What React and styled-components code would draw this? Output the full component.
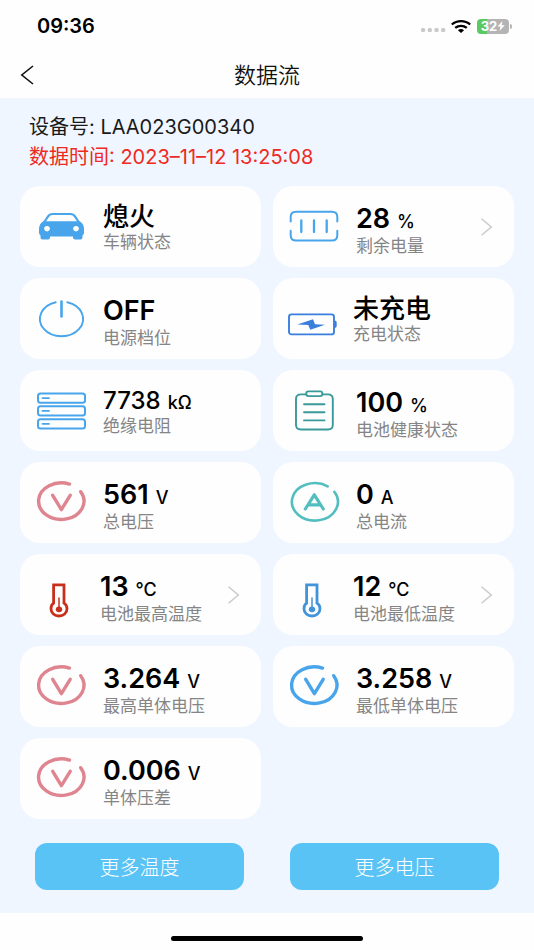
import React from "react";
import styled, { createGlobalStyle } from "styled-components";

const GlobalStyle = createGlobalStyle`
  *, *::before, *::after { box-sizing: border-box; }
  body {
    margin: 0;
    background: #fefefe;
    color: #111;
    font-family: Inter, "Noto Sans CJK SC", sans-serif;
  }
  button { font: inherit; color: inherit; border: 0; background: none; padding: 0; cursor: pointer; }
`;

const Screen = styled.div`
  min-height: 100vh;
  display: flex;
  flex-direction: column;
`;

const StatusBar = styled.div`
  height: 52px;
  padding: 0 22px 0 37px;
  display: flex;
  align-items: center;
  justify-content: space-between;
`;

const Clock = styled.time`
  font-size: 20px;
  font-weight: 600;
  line-height: 24px;
  color: #000;
`;

const StatusIcons = styled.div`
  display: flex;
  align-items: center;
  gap: 6px;
`;

const BatteryPill = styled.div`
  display: flex;
  align-items: center;
  justify-content: center;
  width: 32px;
  height: 15px;
  border-radius: 4px;
  color: #fff;
  font-size: 13px;
  font-weight: 700;
  line-height: 15px;
  background: linear-gradient(90deg, #5bc962 32%, #b4b4b4 32%);
`;

const BatteryGroup = styled.div`
  display: flex;
  align-items: center;
  gap: 1px;
`;

const BatteryNub = styled.span`
  width: 2px;
  height: 5px;
  border-radius: 0 2px 2px 0;
  background: #b4b4b4;
`;

const NavBar = styled.header`
  height: 46px;
  padding: 0 20px;
  display: grid;
  grid-template-columns: 40px 1fr 40px;
  align-items: center;
`;

const BackButton = styled.button`
  display: flex;
  align-items: center;
  height: 40px;
`;

const Title = styled.h1`
  margin: 0;
  text-align: center;
  font-size: 22px;
  font-weight: 350;
  line-height: 30px;
`;

const Content = styled.main`
  flex: 1;
  background: #eff6ff;
  padding: 14px 20px 23px;
`;

const Info = styled.div`
  padding: 0 9px 14px;
`;

const InfoLine = styled.p`
  margin: 0;
  font-size: 20px;
  font-weight: 400;
  line-height: 30px;
  color: ${(p) => (p.$alert ? "#ee2a22" : "#1a1a1a")};
`;

const Grid = styled.div`
  display: grid;
  grid-template-columns: 1fr 1fr;
  gap: 11px 12px;
`;

const Card = styled.div`
  height: 81px;
  padding: 0 22px 0 16px;
  display: flex;
  align-items: center;
  gap: ${(p) => (p.$near ? 14 : 17)}px;
  border-radius: 20px;
  background: #fefefe;
  text-align: left;
`;

const Reading = styled.div`
  flex: 1;
  align-self: flex-start;
  padding-top: 18px;
  display: flex;
  flex-direction: column;
  white-space: nowrap;
`;

const Value = styled.span`
  display: flex;
  align-items: baseline;
  gap: 7px;
  height: ${(p) => (p.$tight ? 26 : 30)}px;
  line-height: ${(p) => (p.$tight ? 26 : 30)}px;
  font-size: ${(p) => (p.$small ? 24 : 27)}px;
  font-weight: ${(p) => (p.$small ? 500 : 600)};
  color: #000;
`;

const CjkValue = styled(Value)`
  font-size: 26px;
  font-weight: 500;
`;

const Unit = styled.span`
  font-size: 18px;
  font-weight: 500;
`;

const Label = styled.span`
  font-size: 17px;
  line-height: 24px;
  color: #858585;
`;

const Drawing = styled.svg`
  flex: none;
  display: block;
  overflow: visible;
`;

const Actions = styled.div`
  display: grid;
  grid-template-columns: 1fr 1fr;
  gap: 46px;
  padding: 24px 15px 0;
`;

const ActionButton = styled.button`
  && {
    height: 47px;
    border-radius: 12px;
    background: #5ac3f5;
    color: #fff;
    font-size: 20px;
    font-weight: 300;
  }
`;

const HomeArea = styled.footer`
  height: 37px;
  display: flex;
  justify-content: center;
  align-items: flex-end;
  padding-bottom: 9px;
`;

const HomeIndicator = styled.div`
  width: 36%;
  height: 5px;
  border-radius: 3px;
  background: #000;
`;

const BLUE = "#48a5eb";
const ROSE = "#df8590";

const Icon = ({ children, color, width = 2 }) => (
  <Drawing
    width="50"
    height="50"
    viewBox="0 0 50 50"
    fill="none"
    stroke={color}
    strokeWidth={width}
    strokeLinecap="round"
    strokeLinejoin="round"
    aria-hidden="true"
  >
    {children}
  </Drawing>
);

const CarIcon = () => (
  <Icon color={BLUE} width={2.2}>
    <path d="M8 20.500 11.700 14.800Q13.600 12 16.600 12H34.400Q37.400 12 39.300 14.800L43 20.500" />
    <path
      fill={BLUE}
      stroke="none"
      fillRule="evenodd"
      d="M7.500 19.200H43.500C46.300 20.500 48 23.500 48 27V30.500Q48 32.500 46.500 33.500V35.500Q46.500 37.500 44.500 37.500H39Q37 37.500 37 35.500V34.500H14V35.500Q14 37.500 12 37.500H6.500Q4.500 37.500 4.500 35.500V33.500Q3 32.500 3 30.500V27C3 23.500 4.700 20.500 7.500 19.200ZM11 24a2.900 2.700 0 1 0 .01 0ZM40 24a2.900 2.700 0 1 0 .01 0Z"
    />
  </Icon>
);

const PowerIcon = () => (
  <Icon color={BLUE} width={1.9}>
    <path d="M19.700 8.300A21.600 17.300 0 1 0 31.300 8.300" />
    <path d="M25.500 7.500V22.500" strokeWidth="2.6" />
  </Icon>
);

const PackIcon = () => (
  <Icon color={BLUE}>
    <path d="M1.700 19.500V15Q1.700 9.800 7 9.800H43Q48.300 9.800 48.300 15V19.500M1.700 28.700V33.200Q1.700 38.500 7 38.500H43Q48.300 38.500 48.300 33.200V28.700" />
    <path d="M12.300 18.500V30M25 18.500V30M37.700 18.500V30" strokeWidth="2.3" />
  </Icon>
);

const ChargeIcon = () => (
  <Icon color="#3b7fdd" width={1.9}>
    <rect x="0" y="20.400" width="45" height="20" rx="2.500" />
    <path d="M45.500 26.500Q47.700 26.500 47.700 28.500V32Q47.700 34 45.500 34Z" fill="#3b7fdd" stroke="none" />
    <path d="M8.300 30.400 24 25.200 26 30.300 36 30.800 21.300 35.800 19.300 31Z" fill="#3b7fdd" stroke="none" />
  </Icon>
);

const StackIcon = () => (
  <Icon color={BLUE}>
    {[7.5, 20.3, 33.2].map((y) => (
      <g key={y}>
        <rect x="2" y={y} width="47" height="9.200" rx="2.500" />
        <path d={`M6.500 ${y + 4.6}H13`} strokeWidth="1.8" />
      </g>
    ))}
  </Icon>
);

const ClipboardIcon = () => (
  <Icon color="#3c9999" width={1.9}>
    <path d="M16.700 8.400H12Q7 8.400 7 13V39Q7 43.500 12 43.500H39Q43.800 43.500 43.800 39V13Q43.800 8.400 39 8.400H33.700" />
    <rect x="17.300" y="5.400" width="16" height="4.700" rx="2" />
    <path d="M15 18.300H35.500M15 26.300H35.500M15 34.400H35.500" />
  </Icon>
);

const VoltIcon = ({ color }) => (
  <Icon color={color} width={3.4}>
    <path d="M33.500 6.100A22.700 18.300 0 1 0 44.700 13.700" />
    <path d="M16.700 17.300 25.400 31.600 34.200 17.300" />
  </Icon>
);

const AmpIcon = () => (
  <Icon color="#52bebf" width={2.6}>
    <path d="M38.700 8.300A23 18.700 0 1 0 45.300 13.800" />
    <path d="M16.300 31 25.300 16.800 34.300 31M20.500 26.800H30.200" strokeWidth="3.2" />
  </Icon>
);

const ThermoIcon = ({ color }) => (
  <Icon color={color} width={2.8}>
    <path
      strokeLinejoin="miter"
      d="M17.600 14.900H28V33.200C30 34.500 31 36.700 31 38.700C31 43 27.400 46 23 46S15 43 15 38.700C15 36.700 15.800 34.500 17.600 33.200Z"
    />
    <path d="M23 28V38" strokeWidth="1.5" />
    <ellipse cx="23" cy="39.300" rx="3.200" ry="2.900" fill={color} stroke="none" />
  </Icon>
);

const Chevron = () => (
  <Drawing width="11" height="18" viewBox="0 0 11 18" fill="none" stroke="#cbcbcb" strokeWidth="1.5" aria-hidden="true">
    <path d="M.5.700 10.300 9 .5 17.300" />
  </Drawing>
);

const readings = [
  { value: "熄火", label: "车辆状态", icon: <CarIcon />, cjk: true, tight: true },
  { value: "28", unit: "%", label: "剩余电量", icon: <PackIcon />, link: true },
  { value: "OFF", label: "电源档位", icon: <PowerIcon /> },
  { value: "未充电", label: "充电状态", icon: <ChargeIcon />, cjk: true, tight: true, near: true },
  { value: "7738", unit: "kΩ", label: "绝缘电阻", icon: <StackIcon />, tight: true, small: true },
  { value: "100", unit: "%", label: "电池健康状态", icon: <ClipboardIcon /> },
  { value: "561", unit: "V", label: "总电压", icon: <VoltIcon color={ROSE} /> },
  { value: "0", unit: "A", label: "总电流", icon: <AmpIcon /> },
  { value: "13", unit: "℃", label: "电池最高温度", icon: <ThermoIcon color="#c9301c" />, link: true, near: true },
  { value: "12", unit: "℃", label: "电池最低温度", icon: <ThermoIcon color="#4193da" />, link: true, near: true },
  { value: "3.264", unit: "V", label: "最高单体电压", icon: <VoltIcon color={ROSE} /> },
  { value: "3.258", unit: "V", label: "最低单体电压", icon: <VoltIcon color={BLUE} /> },
  { value: "0.006", unit: "V", label: "单体压差", icon: <VoltIcon color={ROSE} /> },
];

function ReadingCard({ value, unit, label, icon, cjk, tight, small, link, near }) {
  const ValueText = cjk ? CjkValue : Value;
  return (
    <Card as={link ? "button" : "div"} type={link ? "button" : undefined} $near={near}>
      {icon}
      <Reading>
        <ValueText $tight={tight} $small={small}>
          {value}
          {unit && <Unit>{unit}</Unit>}
        </ValueText>
        <Label>{label}</Label>
      </Reading>
      {link && <Chevron />}
    </Card>
  );
}

export default function App() {
  return (
    <Screen>
      <GlobalStyle />
      <StatusBar>
        <Clock>09:36</Clock>
        <StatusIcons>
          <Drawing width="24" height="14" viewBox="0 0 24 14" fill="#c9c9c9" aria-hidden="true">
            {[0, 6.7, 13.4, 20.1].map((x) => (
              <rect key={x} x={x} y="9" width="4.200" height="4" rx="1.500" />
            ))}
          </Drawing>
          <Drawing width="20" height="13" viewBox="0 0 20 13" fill="none" stroke="#000" strokeWidth="2.3" aria-hidden="true">
            <path d="M.8 4.500C6-.100 14-.100 19.200 4.500M4.200 7.900C7.500 5.100 12.500 5.100 15.800 7.900" />
            <path d="M6.900 10.200Q10 7.800 13.100 10.200L10 13Z" fill="#000" stroke="none" />
          </Drawing>
          <BatteryGroup>
            <BatteryPill>
              32
              <Drawing width="8" height="10" viewBox="0 0 8 10" fill="#fff" aria-hidden="true">
                <path d="M5.500 0 .5 5.600H3.500L2.500 10 7.700 4.200H4.700Z" />
              </Drawing>
            </BatteryPill>
            <BatteryNub />
          </BatteryGroup>
        </StatusIcons>
      </StatusBar>
      <NavBar>
        <BackButton type="button" aria-label="返回">
          <Drawing width="14" height="20" viewBox="0 0 14 20" fill="none" stroke="#111" strokeWidth="1.6" aria-hidden="true">
            <path d="M13 1 1.800 10 13 19" />
          </Drawing>
        </BackButton>
        <Title>数据流</Title>
      </NavBar>
      <Content>
        <Info>
          <InfoLine>设备号: LAA023G00340</InfoLine>
          <InfoLine $alert>数据时间: 2023–11–12 13:25:08</InfoLine>
        </Info>
        <Grid>
          {readings.map((r) => (
            <ReadingCard key={r.label} {...r} />
          ))}
        </Grid>
        <Actions>
          <ActionButton type="button">更多温度</ActionButton>
          <ActionButton type="button">更多电压</ActionButton>
        </Actions>
      </Content>
      <HomeArea>
        <HomeIndicator />
      </HomeArea>
    </Screen>
  );
}
